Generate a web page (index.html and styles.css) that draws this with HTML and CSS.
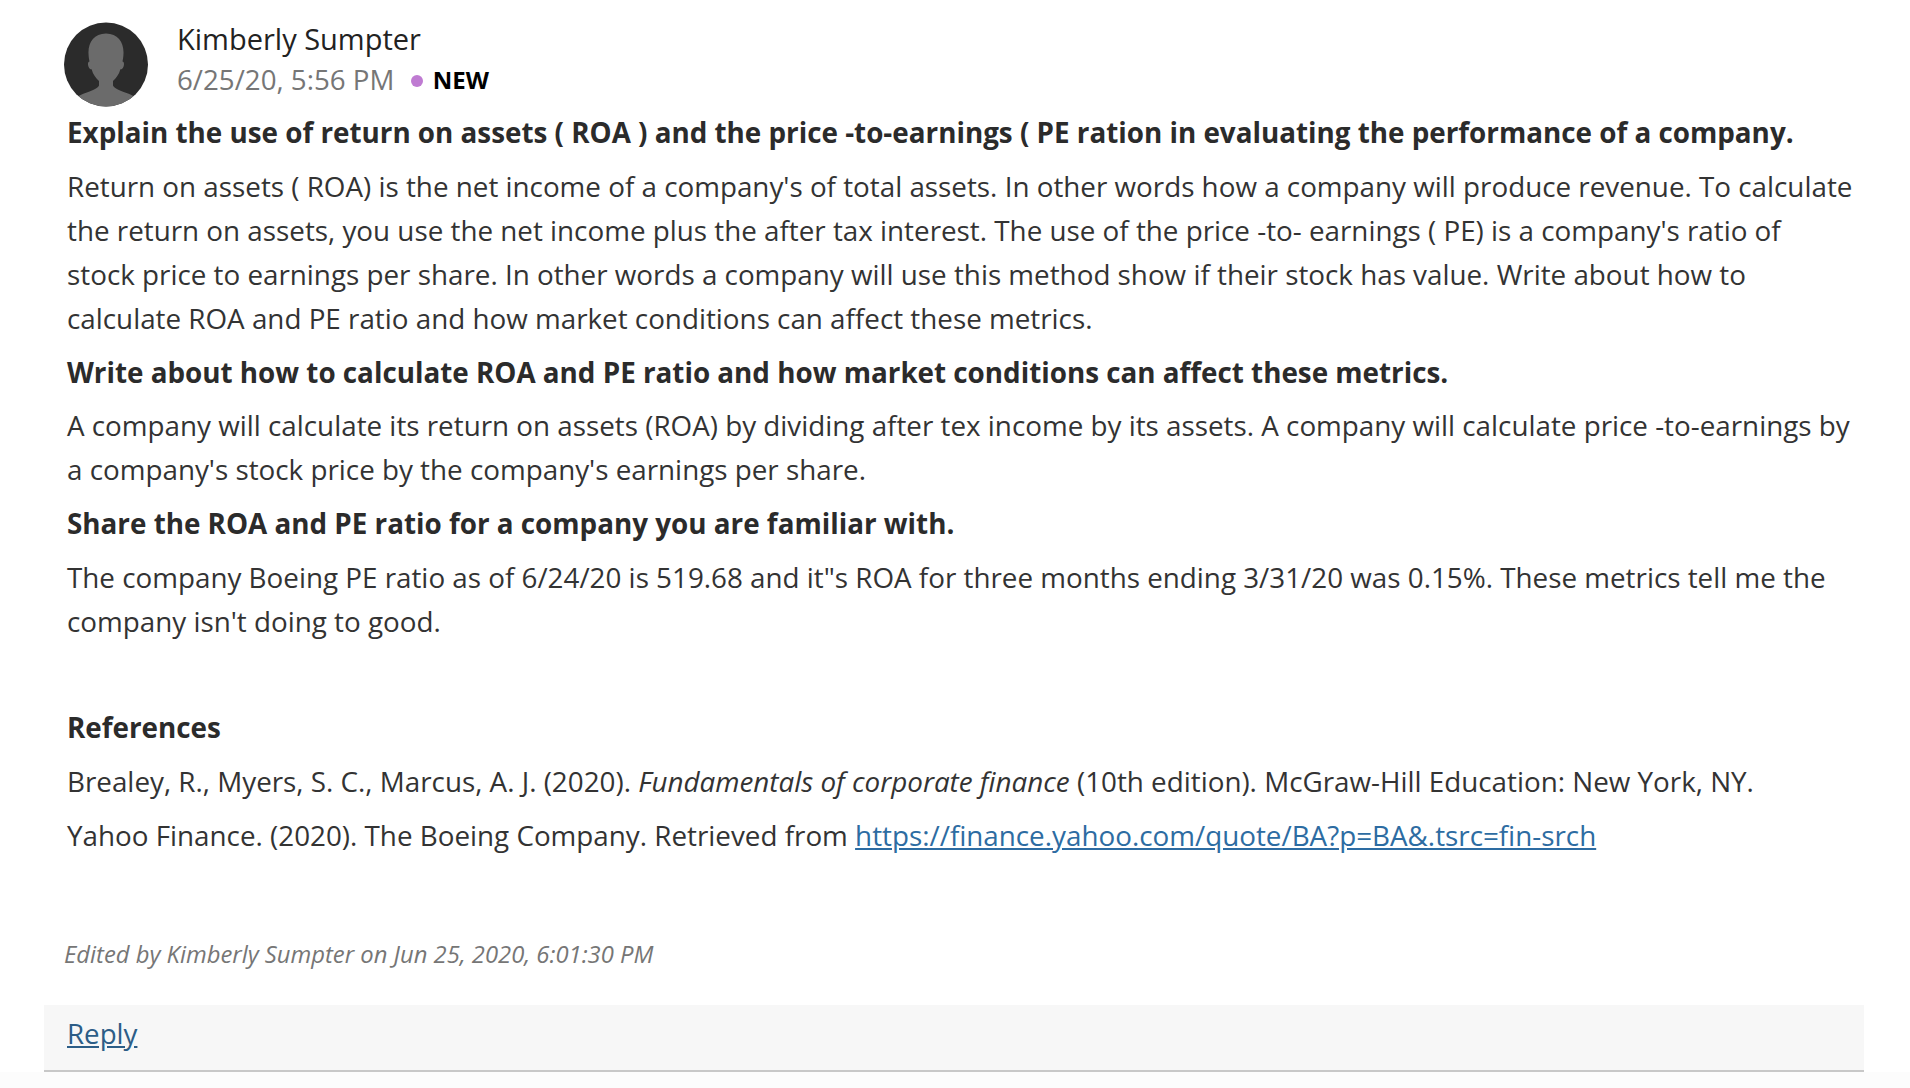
FILE: index.html
```html
<!DOCTYPE html>
<html lang="en">
<head>
<meta charset="utf-8">
<title>Discussion reply</title>
<link rel="stylesheet" href="styles.css">
</head>
<body>
<div class="post">
  <div class="content">
    <header class="post-header">
      <div class="avatar">
        <svg viewBox="0 0 84 84" width="84" height="85" aria-hidden="true">
          <defs><clipPath id="av"><circle cx="42" cy="42" r="42"/></clipPath></defs>
          <circle cx="42" cy="42" r="42" fill="#2b2b2b"/>
          <g clip-path="url(#av)" fill="#6b6b6b">
            <path d="M42 11 C30 11 24 20 24.5 31 C24.6 34 25 37 25.5 39 C23.8 39.2 23.6 42 24.6 44.5 C25.4 46.5 26.6 47 27.6 46.8 C29 52 32 56 35 58.5 L35 63 C34 66 28 68 20 71 C13 73.5 9 78 7 86 L77 86 C75 78 71 73.5 64 71 C56 68 50 66 49 63 L49 58.5 C52 56 55 52 56.4 46.8 C57.4 47 58.6 46.5 59.4 44.5 C60.4 42 60.2 39.2 58.5 39 C59 37 59.4 34 59.5 31 C60 20 54 11 42 11 Z"/>
          </g>
        </svg>
      </div>
      <div class="author">
        <div class="author-name">Kimberly Sumpter</div>
        <div class="author-meta">
          <span class="post-date">6/25/20, 5:56 PM</span>
          <span class="new-dot"></span>
          <span class="new-label">NEW</span>
        </div>
      </div>
    </header>

    <div class="post-body">
      <p class="q">Explain the use of return on assets ( ROA ) and the price -to-earnings ( PE ration in evaluating the performance of a company.</p>
      <p>Return on assets ( ROA) is the net income of a company's of total assets. In other words how a company will produce revenue. To calculate the return on assets, you use the net income plus the after tax interest. The use of the price -to- earnings ( PE) is a company's ratio of<br>stock price to earnings per share. In other words a company will use this method show if their stock has value. Write about how to calculate ROA and PE ratio and how market conditions can affect these metrics.</p>
      <p class="q">Write about how to calculate ROA and PE ratio and how market conditions can affect these metrics.</p>
      <p>A company will calculate its return on assets (ROA) by dividing after tex income by its assets. A company will calculate price -to-earnings by a company's stock price by the company's earnings per share.</p>
      <p class="q">Share the ROA and PE ratio for a company you are familiar with.</p>
      <p>The company Boeing PE ratio as of 6/24/20 is 519.68 and it"s ROA for three months ending 3/31/20 was 0.15%. These metrics tell me the company isn't doing to good.</p>

      <div class="refs">
        <p class="q">References</p>
        <p>Brealey, R., Myers, S. C., Marcus, A. J. (2020). <em>Fundamentals of corporate finance</em> (10th edition). McGraw-Hill Education: New York, NY.</p>
        <p>Yahoo Finance. (2020). The Boeing Company. Retrieved from <a class="ref-link" href="#">https://finance.yahoo.com/quote/BA?p=BA&amp;.tsrc=fin-srch</a></p>
      </div>
    </div>

    <div class="edited">Edited by Kimberly Sumpter on Jun 25, 2020, 6:01:30 PM</div>
  </div>

  <div class="reply-bar">
    <a class="reply-link" href="#">Reply</a>
  </div>
</div>
<div class="next-area"></div>
</body>
</html>
```

FILE: styles.css
```css
html, body {
  margin: 0;
  padding: 0;
  background: #ffffff;
}

body {
  font-family: "Open Sans", "Noto Sans", "Liberation Sans", sans-serif;
  color: #333333;
}

.post {
  padding: 0 46px 0 44px;
}

.content {
  padding-left: 23px;
}

.post-header {
  display: flex;
  align-items: flex-start;
  padding-top: 18px;
  margin-bottom: 3px;
}

.avatar {
  width: 84px;
  height: 85px;
  margin-left: -3px;
  margin-top: 4px;
  margin-right: 29px;
  flex: none;
}

.avatar svg {
  display: block;
  width: 84px;
  height: 85px;
}

.author-name {
  font-size: 29px;
  line-height: 41px;
  color: #222222;
}

.author-meta {
  display: flex;
  align-items: center;
  font-size: 27.7px;
  line-height: 41px;
}

.post-date {
  color: #767676;
}

.new-dot {
  width: 12px;
  height: 12px;
  border-radius: 50%;
  background: #bf7bd2;
  margin-left: 16.5px;
  margin-right: 10px;
  margin-top: 2px;
}

.new-label {
  font-size: 24px;
  font-weight: 700;
  color: #000000;
}

.post-body p {
  margin: 0 0 9.8px;
  font-size: 27.8px;
  line-height: 44px;
  color: #333333;
}

.post-body p.q {
  font-weight: 700;
  color: #2b2b2b;
}

.refs {
  margin-top: 62px;
}

.refs p {
  margin-bottom: 10px;
}

.ref-link {
  color: #2d6ca2;
  text-decoration: underline;
}

.edited {
  margin-top: 80.6px;
  margin-left: -3px;
  font-size: 23.8px;
  line-height: 32px;
  font-style: italic;
  color: #767676;
}

.reply-bar {
  margin-top: 35px;
  background: #f7f7f7;
  border-bottom: 2px solid #c8c8c8;
  padding: 10px 0 14px 23px;
  line-height: 36px;
}

.reply-link {
  font-size: 27.7px;
  color: #2c5d87;
  text-decoration: underline;
}

.next-area {
  height: 40px;
  background: #fcfcfc;
}
```
